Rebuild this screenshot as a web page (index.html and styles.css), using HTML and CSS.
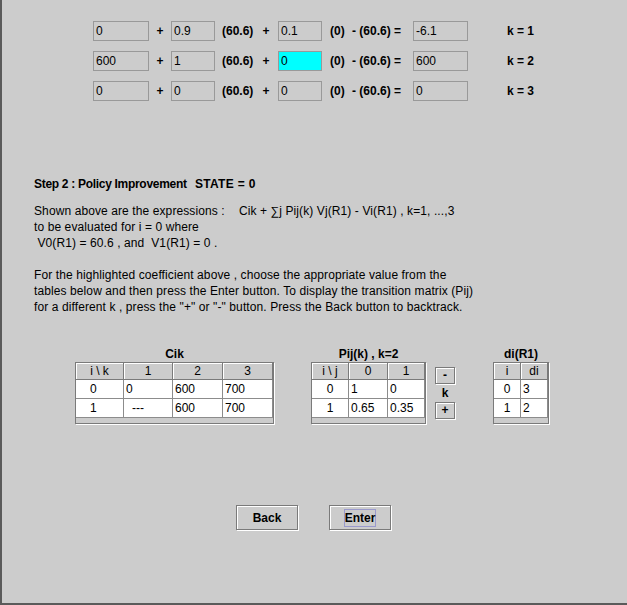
FILE: index.html
```html
<!DOCTYPE html>
<html>
<head>
<meta charset="utf-8">
<link rel="stylesheet" href="styles.css">
</head>
<body>
<div class="frame">
  <div class="rows">
    <div class="field wide">0</div><div class="op">+</div><div class="field">0.9</div><div class="lbl v1">(60.6)</div><div class="op">+</div><div class="field">0.1</div><div class="lbl v0">(0)</div><div class="lbl eq">- (60.6) =</div><div class="field wide">-6.1</div><div class="lbl kk">k = 1</div>
    <div class="field wide">600</div><div class="op">+</div><div class="field">1</div><div class="lbl v1">(60.6)</div><div class="op">+</div><div class="field hl">0</div><div class="lbl v0">(0)</div><div class="lbl eq">- (60.6) =</div><div class="field wide">600</div><div class="lbl kk">k = 2</div>
    <div class="field wide">0</div><div class="op">+</div><div class="field">0</div><div class="lbl v1">(60.6)</div><div class="op">+</div><div class="field">0</div><div class="lbl v0">(0)</div><div class="lbl eq">- (60.6) =</div><div class="field wide">0</div><div class="lbl kk">k = 3</div>
  </div>

  <div class="step"><span class="step-a">Step 2 : Policy Improvement</span><span class="step-b">STATE = 0</span></div>

  <div class="desc">
    <div><span class="lead">Shown above are the expressions :</span>Cik + ∑j Pij(k) Vj(R1) - Vi(R1) , k=1, ...,3</div>
    <div>to be evaluated for i = 0 where</div>
    <div>&nbsp;V0(R1) = 60.6 , and &nbsp;V1(R1) = 0 .</div>
  </div>

  <div class="desc para">
    <div>For the highlighted coefficient above , choose the appropriate value from the</div>
    <div>tables below and then press the Enter button. To display the transition matrix (Pij)</div>
    <div>for a different k , press the "+" or "-" button. Press the Back button to backtrack.</div>
  </div>

  <div class="tables">
    <div class="tblock cik">
      <div class="ttitle">Cik</div>
      <div class="tbl">
        <div class="grid g-cik">
          <div class="th">i \ k</div><div class="th">1</div><div class="th">2</div><div class="th">3</div>
          <div class="td c0">0</div><div class="td">0</div><div class="td">600</div><div class="td">700</div>
          <div class="td c0">1</div><div class="td dash">---</div><div class="td">600</div><div class="td">700</div>
        </div>
      </div>
    </div>

    <div class="tblock pij">
      <div class="ttitle">Pij(k) , k=2</div>
      <div class="tbl">
        <div class="grid g-pij">
          <div class="th">i \ j</div><div class="th">0</div><div class="th">1</div>
          <div class="td ctr">0</div><div class="td">1</div><div class="td">0</div>
          <div class="td ctr">1</div><div class="td">0.65</div><div class="td">0.35</div>
        </div>
      </div>
    </div>

    <div class="kctl">
      <div class="sbtn">-</div>
      <div class="klbl">k</div>
      <div class="sbtn">+</div>
    </div>

    <div class="tblock di">
      <div class="ttitle">di(R1)</div>
      <div class="tbl">
        <div class="grid g-di">
          <div class="th">i</div><div class="th">di</div>
          <div class="td ctr">0</div><div class="td">3</div>
          <div class="td ctr">1</div><div class="td">2</div>
        </div>
      </div>
    </div>
  </div>

  <div class="actions">
    <div class="btn">Back</div>
    <div class="btn"><span class="focus">Enter</span></div>
  </div>
</div>
</body>
</html>
```

FILE: styles.css
```css
html, body {
  margin: 0;
  padding: 0;
}
body {
  width: 627px;
  height: 605px;
  background: #cccccc;
  font-family: "Liberation Sans", Arial, sans-serif;
  font-size: 12px;
  color: #000;
  overflow: hidden;
}
.frame {
  box-sizing: border-box;
  width: 627px;
  height: 605px;
  border-left: 2px solid #5a5a5a;
  border-bottom: 2px solid #5a5a5a;
  padding-top: 21px;
}

/* top equation rows */
.rows {
  display: grid;
  grid-template-columns: 56px 22px 44px 39px 24px 44px 30px 61px 55px auto;
  grid-auto-rows: 20px;
  row-gap: 10px;
  margin-left: 91px;
  align-items: center;
}
.field {
  box-sizing: border-box;
  height: 20px;
  border: 1px solid #999999;
  padding-left: 2px;
  line-height: 18px;
  font-size: 12px;
}
.field.hl {
  background: #00ffff;
}
.op {
  font-weight: bold;
  text-align: center;
}
.lbl {
  font-weight: bold;
  white-space: nowrap;
}
.v1 { padding-left: 7px; }
.v0 { padding-left: 8px; }
.kk { padding-left: 39px; }

/* step text */
.step {
  margin-top: 75px;
  margin-left: 32px;
  line-height: 16px;
  font-weight: bold;
  white-space: nowrap;
}
.step-a {
  display: inline-block;
  width: 161px;
  letter-spacing: -0.3px;
}
.step-b {
  letter-spacing: 0.3px;
}
.desc {
  margin-top: 11px;
  margin-left: 32px;
  line-height: 16px;
  white-space: nowrap;
  letter-spacing: 0.1px;
}
.desc.para {
  margin-top: 16px;
}
.lead {
  display: inline-block;
  width: 205px;
}

/* tables */
.tables {
  display: flex;
  align-items: flex-start;
  margin-top: 31px;
  margin-left: 73px;
}
.tblock {
  display: flex;
  flex-direction: column;
}
.ttitle {
  font-weight: bold;
  text-align: center;
  line-height: 16px;
}
.tbl {
  box-sizing: border-box;
  height: 62px;
  border: 1px solid #7a7a7a;
  box-shadow: 1px 1px 0 #ffffff;
  background: #cccccc;
}
.grid {
  display: grid;
  grid-template-rows: 17px 19px 19px;
}
.g-cik { grid-template-columns: 48px 49px 50px 50px; }
.g-pij { grid-template-columns: 37px 39px 37px; }
.g-di { grid-template-columns: 27px 27px; }
.th {
  box-sizing: border-box;
  border-right: 1px solid #7a7a7a;
  border-bottom: 1px solid #7a7a7a;
  box-shadow: inset 1px 1px 0 #ffffff;
  text-align: center;
  line-height: 16px;
  white-space: nowrap;
}
.td {
  box-sizing: border-box;
  background: #ffffff;
  border-right: 1px solid #8c8c8c;
  border-bottom: 1px solid #8c8c8c;
  padding-left: 2px;
  line-height: 18px;
  white-space: nowrap;
}
.td.c0 { padding-left: 14px; }
.td.ctr { text-align: center; padding-left: 0; }
.td.dash { padding-left: 8px; }

.pij { margin-left: 37px; }
.kctl {
  margin-left: 9px;
  margin-top: 21px;
  width: 20px;
  display: flex;
  flex-direction: column;
  align-items: center;
}
.sbtn {
  box-sizing: border-box;
  width: 20px;
  height: 17px;
  border: 1px solid #7a7a7a;
  box-shadow: 1px 1px 0 #ffffff, inset 1px 1px 0 #ffffff;
  font-weight: bold;
  text-align: center;
  line-height: 15px;
}
.klbl {
  height: 18px;
  line-height: 18px;
  font-weight: bold;
  width: 20px;
  text-align: center;
}
.di { margin-left: 38px; }

/* bottom buttons */
.actions {
  display: flex;
  gap: 31px;
  margin-top: 81px;
  margin-left: 234px;
}
.btn {
  box-sizing: border-box;
  width: 62px;
  height: 25px;
  border: 1px solid #7a7a7a;
  box-shadow: 1px 1px 0 #ffffff, inset 1px 1px 0 #ffffff;
  font-weight: bold;
  display: flex;
  align-items: center;
  justify-content: center;
}
.focus {
  border: 1px solid #9999cc;
  padding: 1px 0;
  line-height: 14px;
}
```
